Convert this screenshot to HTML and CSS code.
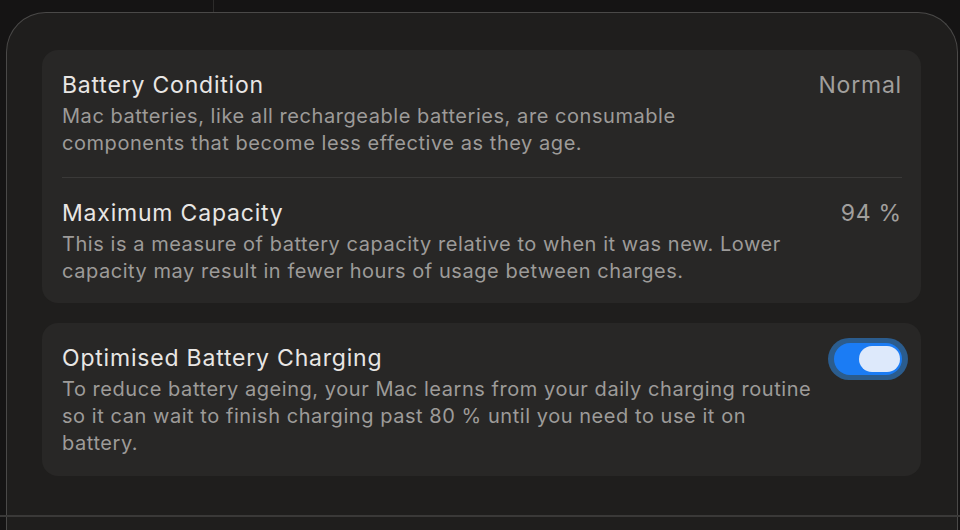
FILE: index.html
```html
<!DOCTYPE html>
<html>
<head>
<meta charset="utf-8">
<link rel="stylesheet" href="styles.css">
</head>
<body>
<div class="topline"></div>
<div class="panel">
  <div class="card">
    <div class="row">
      <div class="text">
        <div class="title">Battery Condition</div>
        <div class="desc">Mac batteries, like all rechargeable batteries, are consumable<br>components that become less effective as they age.</div>
      </div>
      <div class="value">Normal</div>
    </div>
    <div class="sep"></div>
    <div class="row row2">
      <div class="text">
        <div class="title">Maximum Capacity</div>
        <div class="desc">This is a measure of battery capacity relative to when it was new. Lower<br>capacity may result in fewer hours of usage between charges.</div>
      </div>
      <div class="value">94 %</div>
    </div>
  </div>
  <div class="card">
    <div class="row row3">
      <div class="text">
        <div class="title">Optimised Battery Charging</div>
        <div class="desc">To reduce battery ageing, your Mac learns from your daily charging routine<br>so it can wait to finish charging past 80 % until you need to use it on<br>battery.</div>
      </div>
      <div class="toggle"><div class="track"><div class="knob"></div></div></div>
    </div>
  </div>
  <div class="footer"></div>
</div>
</body>
</html>
```
FILE: styles.css
```css
html, body {
  margin: 0;
  padding: 0;
  background: #151414;
  width: 960px;
  height: 530px;
  overflow: hidden;
  font-family: "Inter", "Liberation Sans", sans-serif;
}
.topline {
  position: absolute;
  left: 213px;
  top: 0;
  width: 1px;
  height: 12px;
  background: #2c2b2a;
}
.panel {
  margin: 12px 0 0 6px;
  width: 952px;
  height: 518px;
  box-sizing: border-box;
  background: #1f1e1d;
  border: 1.5px solid #4a4948;
  border-bottom: none;
  border-radius: 40px 40px 0 0;
  padding: 37px 36px 0 35px;
  position: relative;
}
.card {
  background: #282726;
  border-radius: 16px;
  padding: 0 19px 0 20px;
  margin-bottom: 20px;
}
.row {
  display: flex;
  justify-content: space-between;
  align-items: flex-start;
  padding: 20px 0 20px;
}
.row2 { padding: 20px 0 18px; }
.row3 { padding: 20px 0 19px; }
.title {
  font-size: 23px;
  line-height: 30px;
  color: #e8e6e4;
  letter-spacing: 0.8px;
}
.desc {
  margin-top: 3px;
  font-size: 20px;
  line-height: 27px;
  color: #9d9b99;
  letter-spacing: 0.55px;
  white-space: nowrap;
}
.value {
  font-size: 23px;
  line-height: 30px;
  color: #a19f9d;
  letter-spacing: 0.8px;
}
.sep {
  height: 1px;
  background: #3a3938;
}
.toggle {
  margin-top: -5px;
  margin-right: -6px;
  width: 80px;
  height: 42px;
  box-sizing: border-box;
  border-radius: 21px;
  background: #2b5c8d;
  padding: 5px 6px;
}
.track {
  height: 32px;
  border-radius: 16px;
  background: #1b7cf4;
  display: flex;
  justify-content: flex-end;
  align-items: center;
  padding-right: 2px;
}
.knob {
  width: 41px;
  height: 26px;
  border-radius: 13px;
  background: #dde9fb;
}
.footer {
  position: absolute;
  left: -7px;
  right: -10px;
  top: 502px;
  height: 2px;
  background: #3a3938;
}
```
